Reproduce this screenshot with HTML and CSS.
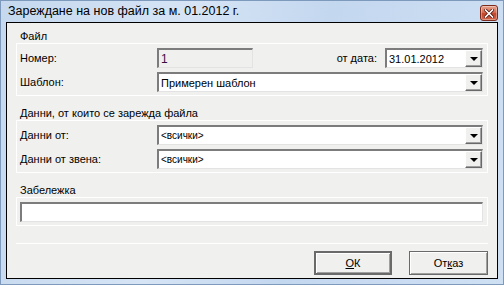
FILE: index.html
```html
<!DOCTYPE html>
<html lang="bg">

<head>
    <meta charset="UTF-8">
    <meta name="viewport" content="width=device-width, initial-scale=1.0">
    <title>Зареждане на нов файл</title>
    <link rel="stylesheet" href="styles.css">
</head>

<body>
    <div class="window">
        <div class="titlebar">
            <span class="title">Зареждане на нов файл за м. 01.2012 г.</span>
            <button class="close" title="Затвори">
                <svg width="10" height="9" viewBox="0 0 10 9">
                    <path d="M1.5 1 L8.5 8 M8.5 1 L1.5 8" stroke="#5a1a10" stroke-width="3.2" stroke-linecap="square" />
                    <path d="M1.5 1 L8.5 8 M8.5 1 L1.5 8" stroke="#fff" stroke-width="1.6" stroke-linecap="square" />
                </svg>
            </button>
        </div>

        <div class="client">
            <div class="legend">Файл</div>
            <div class="group">
                <div class="row">
                    <label class="lbl" for="nomer">Номер:</label>
                    <div class="field disabled short" id="nomer"><span class="val dark">1</span></div>
                    <div class="spacer"></div>
                    <label class="lbl-inline" for="data">от дата:</label>
                    <div class="field combo date" id="data">
                        <span class="val">31.01.2012</span>
                        <span class="drop"><i></i></span>
                    </div>
                </div>
                <div class="row">
                    <label class="lbl" for="shablon">Шаблон:</label>
                    <div class="field combo grow" id="shablon">
                        <span class="val">Примерен шаблон</span>
                        <span class="drop"><i></i></span>
                    </div>
                </div>
            </div>

            <div class="legend second">Данни, от които се зарежда файла</div>
            <div class="group">
                <div class="row">
                    <label class="lbl" for="ot">Данни от:</label>
                    <div class="field combo grow" id="ot">
                        <span class="val small">&lt;всички&gt;</span>
                        <span class="drop"><i></i></span>
                    </div>
                </div>
                <div class="row">
                    <label class="lbl" for="zvena">Данни от звена:</label>
                    <div class="field combo grow" id="zvena">
                        <span class="val small">&lt;всички&gt;</span>
                        <span class="drop"><i></i></span>
                    </div>
                </div>
            </div>

            <div class="legend third">Забележка</div>
            <div class="group">
                <div class="row">
                    <div class="field grow"></div>
                </div>
            </div>

            <hr class="sep">

            <div class="buttons">
                <button class="btn default"><u>О</u>К</button>
                <button class="btn">От<u>к</u>аз</button>
            </div>
        </div>
    </div>
</body>

</html>
```
FILE: styles.css
```css
* {
    box-sizing: border-box;
}

html,
body {
    margin: 0;
    padding: 0;
}

body {
    width: 504px;
    height: 285px;
    font-family: "Liberation Sans", Arial, sans-serif;
    font-size: 11px;
    color: #000;
}

.window {
    width: 504px;
    height: 285px;
    padding: 0 6px 6px 6px;
    display: flex;
    flex-direction: column;
    background: linear-gradient(100deg, #c5d8ee 0%, #d6e4f5 35%, #c3d7ef 60%, #cfe0f3 100%);
    box-shadow: inset 0 0 0 1px #7d99bb;
}

.titlebar {
    height: 22px;
    display: flex;
    align-items: flex-start;
    justify-content: space-between;
}

.title {
    font-size: 12.5px;
    padding: 4px 0 0 2px;
    color: #000;
}

.close {
    margin-top: 5px;
    width: 18px;
    height: 16px;
    padding: 0;
    display: flex;
    align-items: center;
    justify-content: center;
    border: 1px solid #7b2a1c;
    border-radius: 3px;
    background: linear-gradient(#e6a390 0%, #d56f55 45%, #c2452a 55%, #d0654a 100%);
    box-shadow: inset 0 0 0 1px rgba(255, 255, 255, .35);
}

.client {
    flex: 1;
    border: 1px solid #000;
    background: #f0f0ee;
    padding: 0 9px;
    display: flex;
    flex-direction: column;
}

.legend {
    line-height: 14px;
    height: 14px;
    margin-top: 6px;
    padding-left: 4px;
}

.legend.second {
    margin-top: 10px;
}

.legend.third {
    margin-top: 10px;
}

.group {
    border: 1px solid #fff;
    padding: 4px 4px 3px 3px;
    display: flex;
    flex-direction: column;
    gap: 4px;
}

.row {
    display: flex;
    align-items: center;
    height: 20px;
}

.lbl {
    width: 137px;
    flex: none;
}

.lbl-inline {
    margin-right: 8px;
}

.spacer {
    flex: 1;
}

.field {
    height: 20px;
    background: #fff;
    border-style: solid;
    border-width: 2px 1px 1px 2px;
    border-color: #7c7c7c #e3e3e3 #e3e3e3 #7c7c7c;
    display: flex;
    align-items: center;
}

.field.disabled {
    background: #f0f0ee;
}

.short {
    width: 96px;
}

.date {
    width: 98px;
}

.grow {
    flex: 1;
}

.val {
    padding-left: 2px;
    flex: 1;
    white-space: nowrap;
}

.val.dark {
    color: #3a0f3f;
    font-size: 12px;
}

.val.small {
    font-size: 10px;
}

.drop {
    width: 17px;
    height: 17px;
    flex: none;
    background: #f0f0ee;
    border-style: solid;
    border-width: 1px;
    border-color: #fff #696969 #696969 #fff;
    box-shadow: inset -1px -1px 0 #a0a0a0;
    display: flex;
    align-items: center;
    justify-content: center;
}

.drop i {
    width: 0;
    height: 0;
    border-left: 4px solid transparent;
    border-right: 4px solid transparent;
    border-top: 4px solid #000;
    margin-top: 1px;
}

.sep {
    width: 100%;
    margin: 17px 0 0 0;
    border: 0;
    border-top: 1px solid #fff;
    height: 0;
}

.buttons {
    display: flex;
    justify-content: flex-end;
    gap: 17px;
    margin-top: 7px;
}

.btn {
    width: 79px;
    height: 24px;
    font-family: "Liberation Sans", Arial, sans-serif;
    font-size: 11px;
    color: #000;
    background: #f0f0ee;
    border: 1px solid #6a6a6a;
    box-shadow: inset 1px 1px 0 #fff, inset -1px -1px 0 #a0a0a0;
    padding: 0;
}

.btn.default {
    width: 78px;
    border: 2px solid #6a6a6a;
}
```
